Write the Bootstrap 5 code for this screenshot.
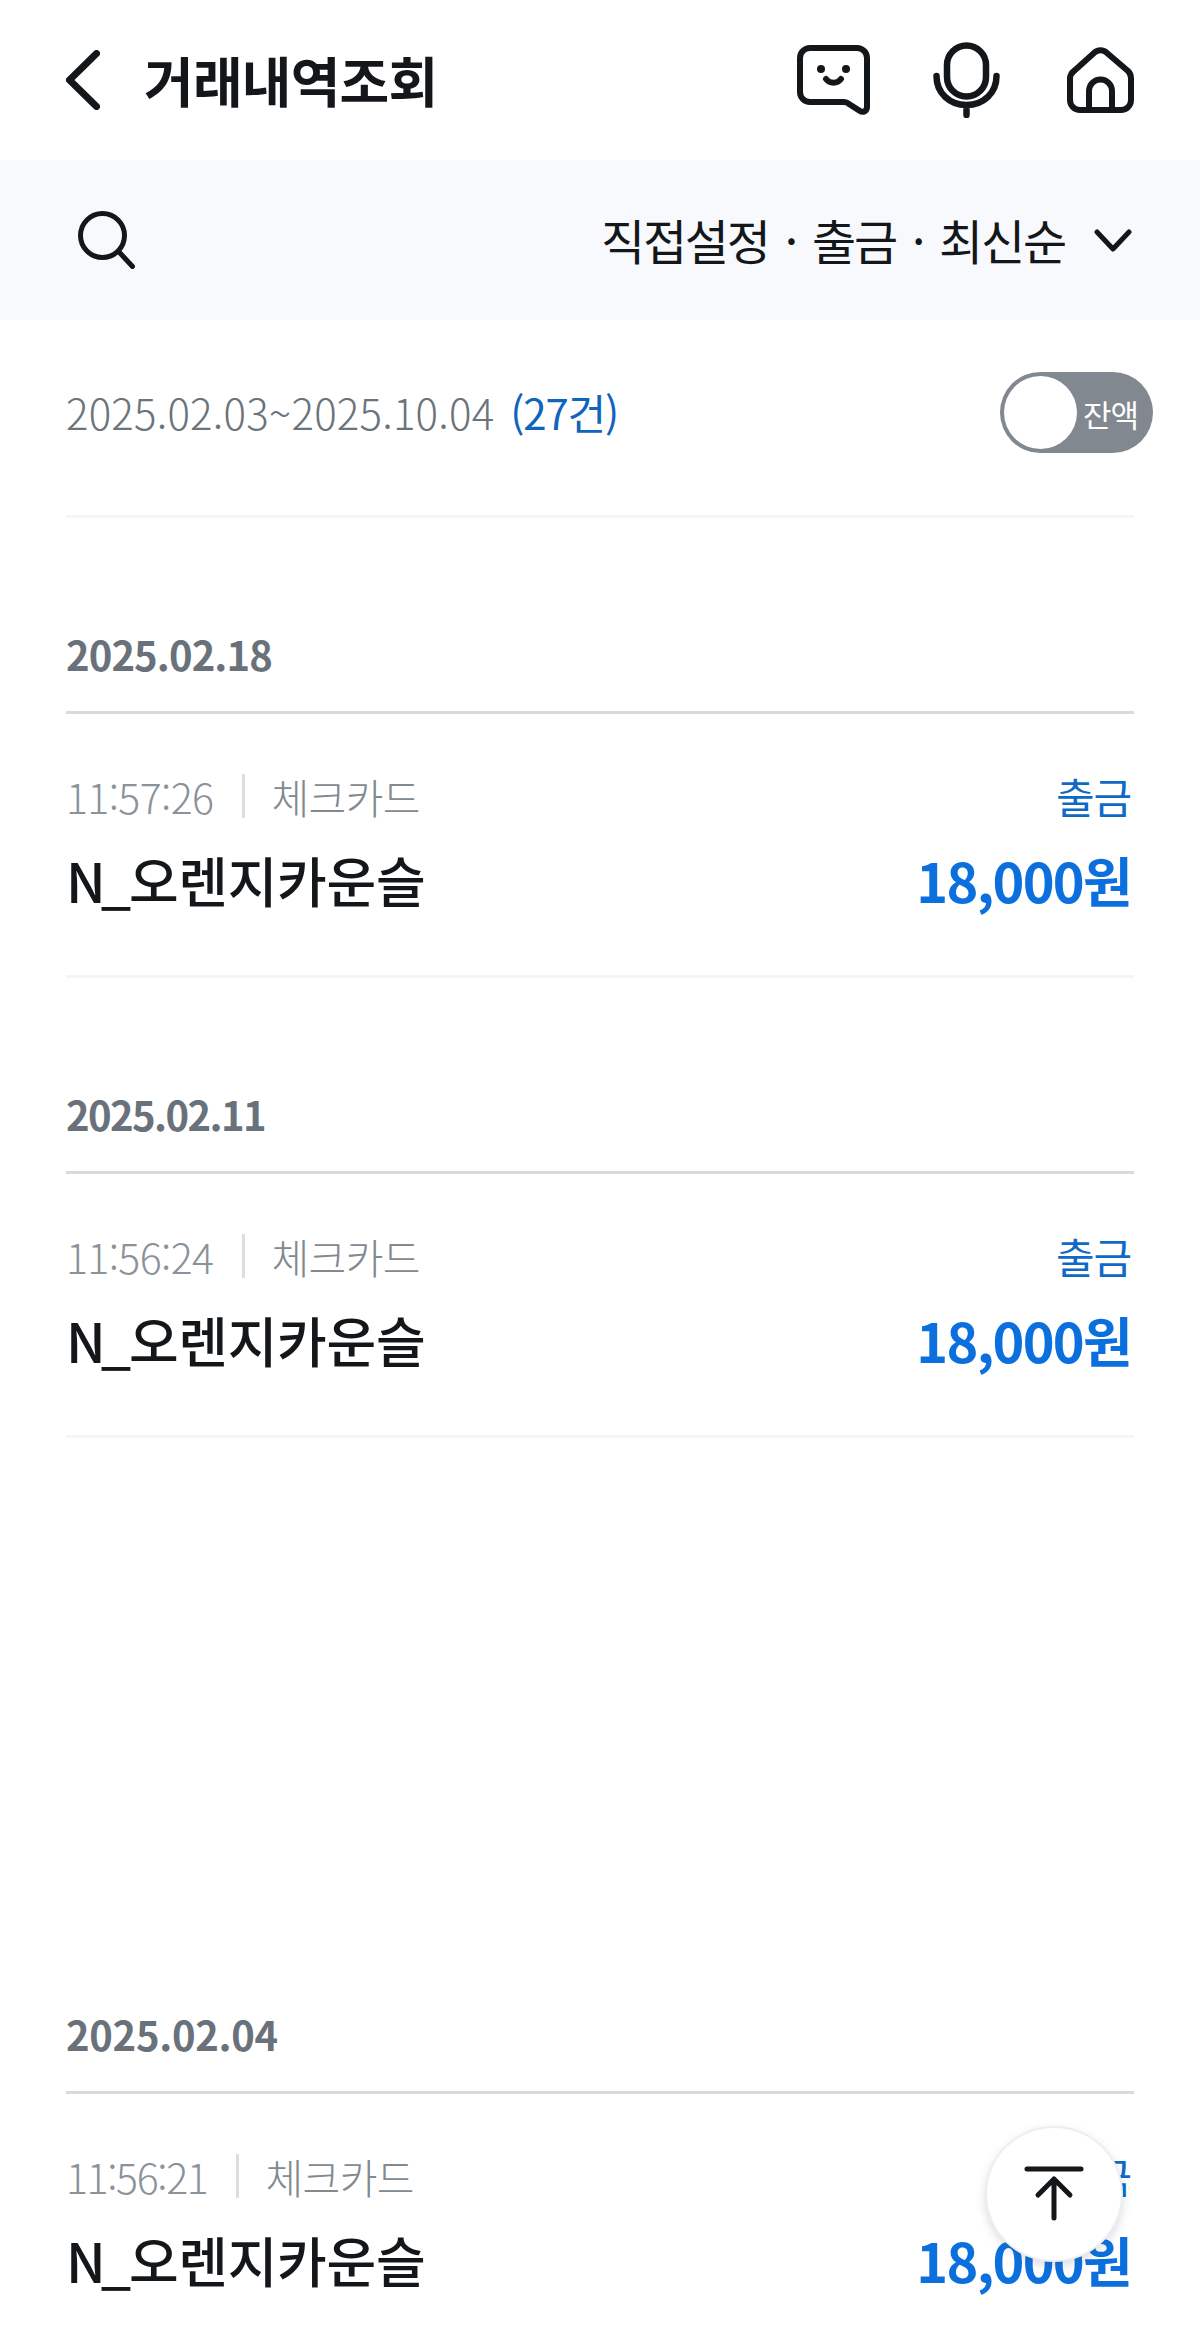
<!doctype html>
<html lang="ko">
<head>
<meta charset="utf-8">
<title>거래내역조회</title>
<link href="https://cdn.jsdelivr.net/npm/bootstrap@5.3.0/dist/css/bootstrap.min.css" rel="stylesheet">
<style>
html,body{background:#fff;}
body{font-family:"Noto Sans CJK KR","Noto Sans",sans-serif;color:#14171a;overflow:hidden;height:2346px;position:relative;}
.hd-bar{height:160px;padding:0 66px;}
.hd-title{font-size:54px;font-weight:700;letter-spacing:-.8px;line-height:1;margin:0 0 0 44px;color:#14171a;}
.hd-icons{gap:63px;}
.hd-home{margin-left:4px;}
.flt-bar{height:160px;background:#f8f9fd;padding:0 68px 0 78px;}
.flt-text{font-size:48px;font-weight:400;letter-spacing:-2.2px;line-height:1;color:#14171a;padding-bottom:2px;}
.flt-dot{margin:0 16px;}
.flt-chev{margin-left:29px;}
.sum-row{height:198px;margin:0 66px;border-bottom:3px solid #f4f5f6;padding-bottom:12px;position:relative;}
.sum-date{font-size:42px;color:#6b737b;letter-spacing:.2px;line-height:1;font-weight:300;}
.sum-count{color:#0f64bd;margin-left:16px;font-weight:400;letter-spacing:-1.2px;}
.bal-toggle{width:153px;height:81px;border-radius:41px;background:#81888f;position:absolute;left:934px;top:52px;}
.bal-knob{position:absolute;left:4px;top:4px;width:73px;height:73px;border-radius:50%;background:#fff;}
.bal-label{position:absolute;left:83px;top:1px;line-height:81px;font-size:31px;color:#fff;letter-spacing:-1px;}
.tx-wrap{margin:0 66px;}
.tx-date{font-size:40px;font-weight:700;color:#69717a;letter-spacing:-.9px;line-height:1;padding-bottom:37px;border-bottom:3px solid #d9dadd;}
.tx-date-tight{letter-spacing:-1.6px;}
.tx-date-loose{letter-spacing:-.3px;}
.tx-item{padding:58px 0 0 0;height:264px;border-bottom:3px solid #f4f5f6;}
.tx-top{height:48px;padding-right:3px;}
.tx-time{font-size:41px;color:#8b9299;letter-spacing:-.6px;font-weight:300;line-height:1;}
.tx-time-tight{letter-spacing:-1.35px;}
.tx-sep{width:3px;height:44px;background:#dcdee0;margin:0 26px 0 29px;}
.tx-kind{font-size:41px;color:#82898f;letter-spacing:-.6px;font-weight:300;line-height:1;}
.tx-flow{font-size:42px;color:#0f6ac6;letter-spacing:-1.2px;line-height:1;font-weight:400;}
.tx-name{font-size:54px;font-weight:500;color:#14171a;letter-spacing:-.3px;line-height:1;}
.tx-latin{letter-spacing:-5px;margin-right:3px;}
.tx-amount{font-size:54px;font-weight:700;color:#0b70de;letter-spacing:-1.7px;line-height:1;}
.tx-main{margin-top:33px;padding-right:3px;}
.sec-a{margin-top:116px;}
.sec-b{margin-top:116px;}
.sec-c{margin-top:576px;}
.top-btn{position:absolute;left:985px;top:2126px;width:138px;height:136px;border-radius:50%;background:#fff;border:2px solid #eceef3;box-shadow:0 4px 10px rgba(60,70,90,.18);padding:0;}
</style>
</head>
<body>
<header class="hd-bar d-flex align-items-center justify-content-between">
  <div class="d-flex align-items-center">
    <svg width="34" height="60" viewBox="0 0 34 60" fill="none" stroke="#14171a" stroke-width="7" stroke-linecap="round" stroke-linejoin="round"><path d="M30.5 3.5 3.5 30 30.5 56.5"/></svg>
    <h1 class="hd-title">거래내역조회</h1>
  </div>
  <div class="hd-icons d-flex align-items-center">
    <svg width="73" height="70" viewBox="0 0 73 70" fill="none" stroke="#14171a" stroke-width="6" stroke-linecap="round" stroke-linejoin="round"><path d="M13 3H60a10 10 0 0 1 10 10V62c0 4-4 6-7 4L52 59a8 8 0 0 0-5-2H13a10 10 0 0 1-10-10V13A10 10 0 0 1 13 3Z"/><circle cx="24" cy="24" r="4" fill="#14171a" stroke="none"/><circle cx="49" cy="24" r="4" fill="#14171a" stroke="none"/><path d="M29 34c4 5 11 5 15 0"/></svg>
    <svg width="67" height="76" viewBox="0 0 67 76" fill="none" stroke="#14171a" stroke-width="6.5" stroke-linecap="round" stroke-linejoin="round"><rect x="14" y="3.500" width="39" height="51" rx="19.500"/><path d="M3.500 34c0 17 13 29 30 29s30-12 30-29M33.500 63V73"/></svg>
    <svg class="hd-home" width="67" height="66" viewBox="0 0 67 66" fill="none" stroke="#14171a" stroke-width="6" stroke-linecap="round" stroke-linejoin="round"><path d="M27 6 7 24a10 10 0 0 0-4 7V53a10 10 0 0 0 10 10H54a10 10 0 0 0 10-10V31a10 10 0 0 0-3-7L40 6a9 9 0 0 0-13 0Z"/><path d="M22 63V44a11.500 11.500 0 0 1 23 0V63"/></svg>
  </div>
</header>
<section class="flt-bar d-flex align-items-center justify-content-between">
  <svg width="57" height="58" viewBox="0 0 57 58" fill="none" stroke="#14171a" stroke-width="5" stroke-linecap="round"><circle cx="24.500" cy="24.500" r="22"/><path d="M42 42 54.500 55.500"/></svg>
  <div class="d-flex align-items-center">
    <span class="flt-text">직접설정<span class="flt-dot">·</span>출금<span class="flt-dot">·</span>최신순</span>
    <svg class="flt-chev" width="38" height="23" viewBox="0 0 38 23" fill="none" stroke="#14171a" stroke-width="5" stroke-linecap="round" stroke-linejoin="round"><path d="M3 3 19 20 35 3"/></svg>
  </div>
</section>
<section class="sum-row d-flex align-items-center">
  <span class="sum-date">2025.02.03~2025.10.04<span class="sum-count">(27건)</span></span>
  <div class="bal-toggle"><span class="bal-knob"></span><span class="bal-label">잔액</span></div>
</section>
<main class="tx-wrap">
  <section class="sec-a">
    <div class="tx-date">2025.02.18</div>
    <div class="tx-item">
      <div class="tx-top d-flex align-items-center justify-content-between">
        <div class="d-flex align-items-center"><span class="tx-time">11:57:26</span><span class="tx-sep"></span><span class="tx-kind">체크카드</span></div>
        <span class="tx-flow">출금</span>
      </div>
      <div class="tx-main d-flex align-items-center justify-content-between"><span class="tx-name"><span class="tx-latin">N_</span>오렌지카운슬</span><span class="tx-amount">18,000원</span></div>
    </div>
  </section>
  <section class="sec-b">
    <div class="tx-date tx-date-tight">2025.02.11</div>
    <div class="tx-item">
      <div class="tx-top d-flex align-items-center justify-content-between">
        <div class="d-flex align-items-center"><span class="tx-time">11:56:24</span><span class="tx-sep"></span><span class="tx-kind">체크카드</span></div>
        <span class="tx-flow">출금</span>
      </div>
      <div class="tx-main d-flex align-items-center justify-content-between"><span class="tx-name"><span class="tx-latin">N_</span>오렌지카운슬</span><span class="tx-amount">18,000원</span></div>
    </div>
  </section>
  <section class="sec-c">
    <div class="tx-date tx-date-loose">2025.02.04</div>
    <div class="tx-item">
      <div class="tx-top d-flex align-items-center justify-content-between">
        <div class="d-flex align-items-center"><span class="tx-time tx-time-tight">11:56:21</span><span class="tx-sep"></span><span class="tx-kind">체크카드</span></div>
        <span class="tx-flow">출금</span>
      </div>
      <div class="tx-main d-flex align-items-center justify-content-between"><span class="tx-name"><span class="tx-latin">N_</span>오렌지카운슬</span><span class="tx-amount">18,000원</span></div>
    </div>
  </section>
</main>
<button class="top-btn d-flex align-items-center justify-content-center" type="button" aria-label="맨 위로">
  <svg width="60" height="56" viewBox="0 0 60 56" fill="none" stroke="#14171a" stroke-width="5" stroke-linecap="round" stroke-linejoin="round"><path d="M3 3H57M30 13V52M14 29 30 13 46 29"/></svg>
</button>
<script src="https://cdn.jsdelivr.net/npm/bootstrap@5.3.0/dist/js/bootstrap.bundle.min.js"></script>
</body>
</html>
